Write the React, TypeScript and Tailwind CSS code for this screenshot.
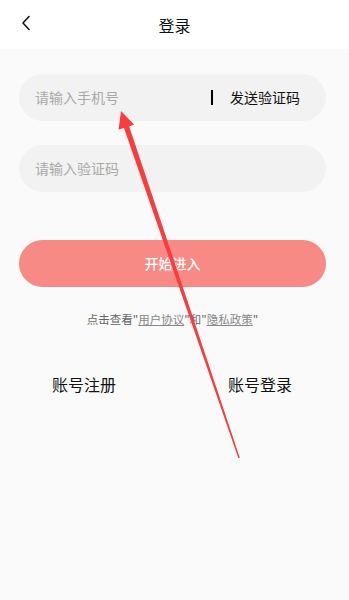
import { useState } from "react";

function BackIcon() {
  return (
    <svg width="10" height="16" viewBox="0 0 10 16" fill="none">
      <path d="M8 1.5L2 8l6 6.5" stroke="#111" strokeWidth="1.6" strokeLinecap="round" strokeLinejoin="round" />
    </svg>
  );
}

// red annotation arrow drawn over the screen
function Arrow() {
  return (
    <svg className="pointer-events-none absolute left-0 top-0" width="349" height="600" viewBox="0 0 349 600">
      <polygon
        points="121,111 134,124.6 129.2,126.4 239.8,457.8 238.4,458.3 124,128 118.6,129.6"
        fill="#fb3c3c"
      />
    </svg>
  );
}

export default function App() {
  const [phone, setPhone] = useState("");
  const [code, setCode] = useState("");

  return (
    <div
      className="relative h-[600px] w-[349px] overflow-hidden bg-[#fafafa]"
      style={{ fontFamily: '"Noto Sans CJK SC", "Noto Sans", sans-serif' }}
    >
      <div className="relative flex h-[49px] items-center justify-center bg-white">
        <button className="absolute left-[21px] top-[15px]">
          <BackIcon />
        </button>
        <span className="text-[16px] text-[#111]">登录</span>
      </div>

      <div className="pl-[19px] pr-[23px] pt-[25px]">
        <div className="flex h-[47px] items-center rounded-full bg-[#f2f2f2] pl-[16px] pr-[26px]">
          <input
            value={phone}
            onChange={(e) => setPhone(e.target.value)}
            placeholder="请输入手机号"
            className="min-w-0 flex-1 bg-transparent text-[14px] text-[#333] outline-none placeholder:text-[#a9a9a9]"
          />
          <span className="mr-[17px] h-[15px] w-[2px] bg-black" />
          <span className="text-[14px] text-[#111]">发送验证码</span>
        </div>

        <div className="mt-[24px] flex h-[47px] items-center rounded-full bg-[#f2f2f2] px-[16px]">
          <input
            value={code}
            onChange={(e) => setCode(e.target.value)}
            placeholder="请输入验证码"
            className="min-w-0 flex-1 bg-transparent text-[14px] text-[#333] outline-none placeholder:text-[#a9a9a9]"
          />
        </div>

        <button className="mt-[48px] flex h-[47px] w-full items-center justify-center rounded-full bg-[#f88a85] text-[14px] font-medium text-white">
          开始进入
        </button>

        <p className="mt-[24px] text-center text-[11.5px] text-[#666]">
          点击查看"<span className="text-[#888] underline">用户协议</span>"和"
          <span className="text-[#888] underline">隐私政策</span>"
        </p>
      </div>

      <div className="mt-[44px] flex justify-between pl-[52px] pr-[57px] text-[16px] text-[#111]">
        <span>账号注册</span>
        <span>账号登录</span>
      </div>

      <Arrow />
    </div>
  );
}
